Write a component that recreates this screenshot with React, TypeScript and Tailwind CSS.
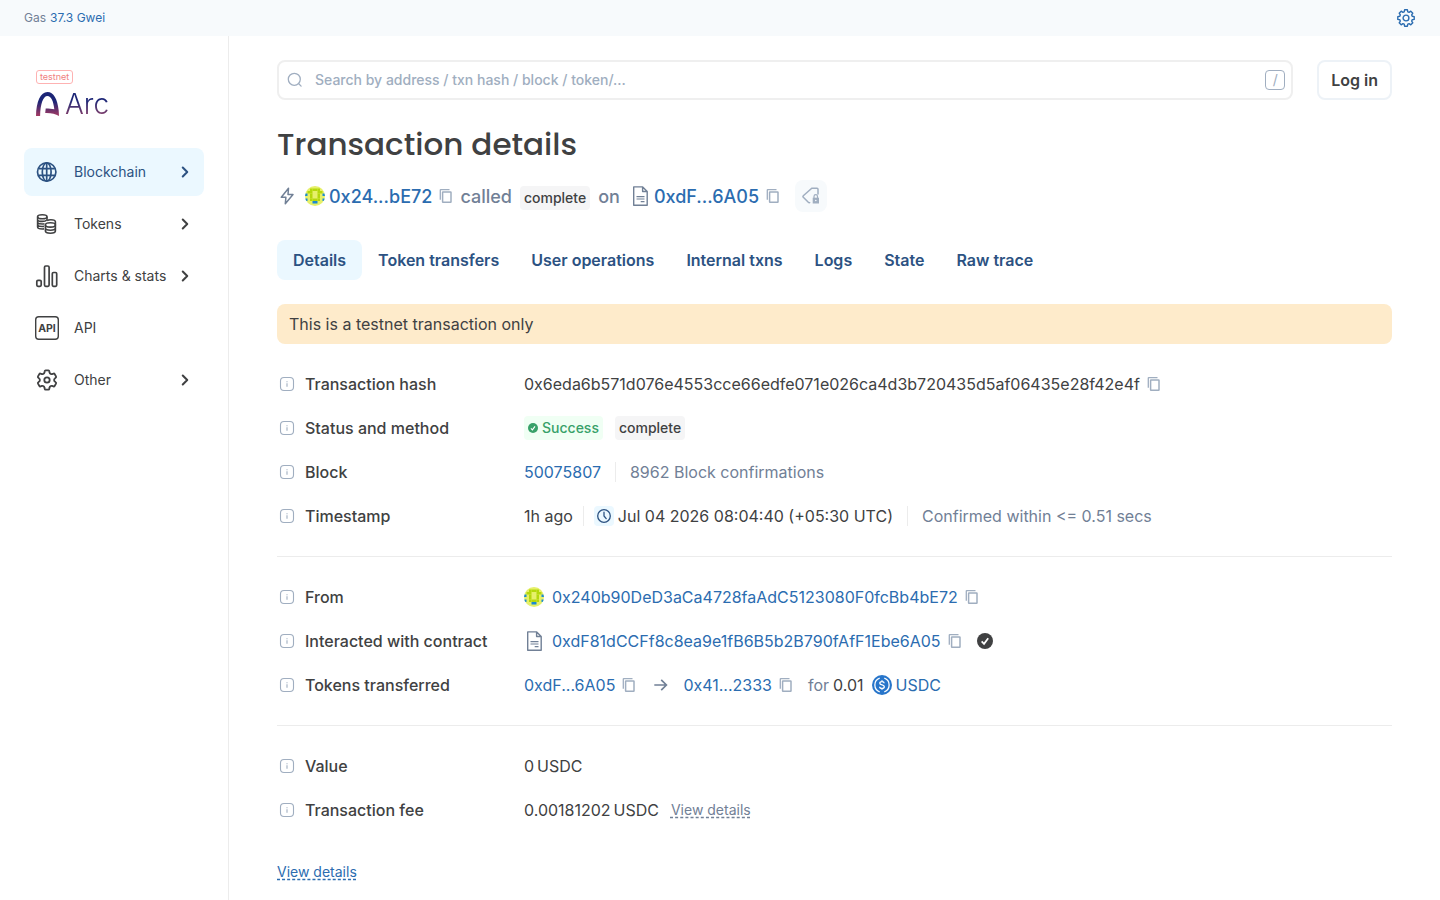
import type { ReactNode } from "react"
import { ChevronRight } from "lucide-react"

// Types
interface NavItem {
  label: string
  icon: ReactNode
  active?: boolean
  nested?: boolean
}

interface DetailRow {
  label: string
  value: ReactNode
}

const tabs = ["Details", "Token transfers", "User operations", "Internal txns", "Logs", "State", "Raw trace"]

/* Icons */
function GlobeIcon() {
  return (
    <svg viewBox="0 0 30 30" className="w-[30px] h-[30px] shrink-0" fill="none" stroke="currentColor" strokeWidth="1.7">
      <circle cx="14.700" cy="15" r="9.2" />
      <ellipse cx="14.700" cy="15" rx="4.4" ry="9.2" />
      <path d="M14.700 6v18M6.500 11.600h16.400M6.500 18.400h16.400" />
    </svg>
  )
}

function TokensIcon() {
  return (
    <svg viewBox="0 0 30 30" className="w-[30px] h-[30px] shrink-0" fill="none" stroke="currentColor" strokeWidth="1.600">
      <ellipse cx="10.300" cy="7.700" rx="4.700" ry="2" />
      <path d="M5.600 7.700v10.300c0 1.200 2.100 2 4.700 2 .6 0 1.200 0 1.700-.1M15 7.700v3.500M5.600 10.400c0 1.200 2.100 2 4.700 2 1.900 0 3.600-.5 4.300-1.200M5.600 13c0 1.200 2.100 2 4.700 2 .8 0 1.500-.1 2.200-.2M5.600 15.500c0 1.200 2.100 2 4.700 2 .6 0 1.200 0 1.700-.1" />
      <ellipse cx="18.400" cy="15.900" rx="5" ry="2.200" />
      <path d="M13.400 15.900v6.200c0 1.300 2.200 2.200 5 2.200s5-.9 5-2.200v-9.300c0-1.200-2-2.100-4.600-2.100-1.500 0-2.900.3-3.700.9M13.400 19c0 1.300 2.200 2.200 5 2.200s5-.9 5-2.200" />
    </svg>
  )
}

function StatsIcon() {
  return (
    <svg viewBox="0 0 30 30" className="w-[30px] h-[30px] shrink-0" fill="none" stroke="currentColor" strokeWidth="1.7">
      <rect x="4.800" y="19.300" width="4.400" height="6" rx="1.200" />
      <rect x="12.500" y="5" width="4.600" height="20.300" rx="1.200" />
      <rect x="20.300" y="11.500" width="4.400" height="13.800" rx="1.200" />
    </svg>
  )
}

function ApiIcon() {
  return (
    <svg viewBox="0 0 30 30" className="w-[30px] h-[30px] shrink-0">
      <rect x="3.700" y="3.700" width="22.600" height="22.600" rx="3" fill="none" stroke="currentColor" strokeWidth="1.4" />
      <text x="15" y="19" textAnchor="middle" fontSize="10.500" fontWeight="700" fill="currentColor">API</text>
    </svg>
  )
}

function GearIcon() {
  return (
    <svg viewBox="0 0 30 30" className="w-[30px] h-[30px] shrink-0" fill="none" stroke="currentColor" strokeWidth="1.800" strokeLinejoin="round">
      <path d="M13.600 5.400h2.800q.8 0 .9.800l.3 1.500q.1.600.7.900l.6.400q.5.300 1.100.1l1.500-.5q.7-.3 1.100.4l1.400 2.400q.4.700-.2 1.200l-1.100 1q-.5.400-.5 1v.8q0 .6.500 1l1.100 1q.6.500.2 1.200l-1.400 2.400q-.4.700-1.100.4l-1.500-.5q-.6-.2-1.100.1l-.6.400q-.6.300-.7.900l-.3 1.500q-.1.800-.9.800h-2.800q-.8 0-.9-.8l-.3-1.500q-.1-.6-.7-.9l-.6-.4q-.5-.3-1.100-.1l-1.500.5q-.7.300-1.100-.4l-1.400-2.400q-.4-.7.200-1.200l1.100-1q.5-.4.500-1v-.8q0-.6-.5-1l-1.100-1q-.6-.5-.2-1.200l1.400-2.400q.4-.7 1.100-.4l1.500.5q.6.200 1.100-.1l.6-.4q.6-.3.700-.9l.3-1.500q.1-.8.900-.8z" />
      <circle cx="15" cy="15" r="2.700" />
    </svg>
  )
}

function SettingsIcon() {
  return (
    <svg viewBox="0 0 20 20" className="size-5" fill="none" stroke="currentColor" strokeWidth="1.400" strokeLinejoin="round">
      <path d="M8.600 1.800h2.800l.4 2 1.300.5 1.700-1.100 2 2-1.100 1.700.5 1.300 2 .4v2.800l-2 .4-.5 1.300 1.100 1.700-2 2-1.700-1.100-1.300.5-.4 2H8.600l-.4-2-1.300-.5-1.700 1.100-2-2 1.100-1.700-.5-1.300-2-.4V8.600l2-.4.5-1.300-1.100-1.700 2-2 1.700 1.100 1.300-.5z" />
      <circle cx="10" cy="10" r="2.900" />
    </svg>
  )
}

function InfoIcon() {
  return (
    <svg viewBox="0 0 20 20" className="size-5 shrink-0 text-[#a0aec0]" fill="none" stroke="currentColor">
      <rect x="3.500" y="3.500" width="13" height="13" rx="3.500" strokeWidth="1.100" />
      <path d="M10 9.300v3.500M10 7.200v1.100" strokeWidth="1.100" />
    </svg>
  )
}

function CopyButton() {
  return (
    <button type="button" aria-label="Copy to clipboard" className="size-5 shrink-0 text-[#a0aec0]">
      <svg viewBox="0 0 20 20" className="size-5" fill="none" stroke="currentColor" strokeLinejoin="round">
        <path d="M4.300 13.800V4.100q0-.5.500-.5h8.700" strokeWidth="1.300" />
        <rect x="6.600" y="5.900" width="8.400" height="10.400" rx=".4" strokeWidth="1.500" />
      </svg>
    </button>
  )
}

function ContractIcon() {
  return (
    <svg viewBox="0 0 20 20" className="size-5 shrink-0 text-[#718096]" fill="none" stroke="currentColor" strokeWidth="1.400">
      <path d="M3.700.9h9l4.500 4.500v13.800H3.700zM12.600.9v4.600h4.600" strokeLinejoin="round" />
      <path d="M6.500 10.600h8M6.500 13h8M10.700 15.600h3.800" strokeWidth="1.200" />
    </svg>
  )
}

// 8x8 blockie, g = green, b = blue, dot = background
const blockie = [
  "........",
  "..gggg..",
  ".gg..gg.",
  "b.g..g.b",
  "..g..g..",
  "b.gggg.b",
  "...bb...",
  "........",
]

function Identicon() {
  return (
    <svg viewBox="0 0 8 8" className="size-5 shrink-0 rounded-full bg-[#e6f06a]">
      {blockie.map((row, y) =>
        row.split("").map((cell, x) =>
          cell === "." ? null : (
            <rect key={`${x}-${y}`} x={x} y={y} width="1" height="1" fill={cell === "g" ? "#b5d80c" : "#1b8ad3"} />
          )
        )
      )}
    </svg>
  )
}

function UsdcIcon() {
  return (
    <svg viewBox="0 0 20 20" className="size-5 shrink-0" fill="none" stroke="#fff">
      <circle cx="10" cy="10" r="10" fill="#2775ca" stroke="none" />
      <path d="M7.700 3.200a7.200 7.200 0 0 0 0 13.600M12.300 3.200a7.200 7.200 0 0 1 0 13.600" strokeWidth="1.300" />
      <path d="M12.200 8.200c-.1-1-1-1.600-2.200-1.600s-2.200.6-2.200 1.600c0 2.300 4.500 1.200 4.500 3.500 0 1-1 1.700-2.300 1.700s-2.300-.6-2.400-1.700M10 5.200v1.400M10 13.400v1.400" strokeWidth="1.300" />
    </svg>
  )
}

function CheckIcon({ className }: { className: string }) {
  return (
    <svg viewBox="0 0 20 20" className={className}>
      <circle cx="10" cy="10" r="10" fill="currentColor" />
      <path d="M5.800 10.600l3 3 5.200-7" fill="none" stroke="#fff" strokeWidth="2.200" />
    </svg>
  )
}

function Address({ children }: { children: string }) {
  return <a href="#" className="text-[#2b6cb0]">{children}</a>
}

function MethodTag() {
  return <span className="inline-flex items-center h-6 px-1 rounded-sm bg-[#f5f5f6] text-sm leading-5 font-medium text-[#404142]">complete</span>
}

function Separator() {
  return <span className="w-px h-5 bg-[#ececec]" />
}

const navItems: NavItem[] = [
  { label: "Blockchain", icon: <GlobeIcon />, active: true, nested: true },
  { label: "Tokens", icon: <TokensIcon />, nested: true },
  { label: "Charts & stats", icon: <StatsIcon />, nested: true },
  { label: "API", icon: <ApiIcon /> },
  { label: "Other", icon: <GearIcon />, nested: true },
]

const rowGroups: DetailRow[][] = [
  [
    {
      label: "Transaction hash",
      value: (
        <div className="flex items-center gap-1">
          <span>0x6eda6b571d076e4553cce66edfe071e026ca4d3b720435d5af06435e28f42e4f</span>
          <CopyButton />
        </div>
      ),
    },
    {
      label: "Status and method",
      value: (
        <div className="flex items-center gap-3">
          <span className="inline-flex items-center gap-1 h-6 px-1 rounded-sm bg-[#f0fff4] text-sm leading-5 font-medium text-[#38a169]">
            <CheckIcon className="size-[10px]" />
            Success
          </span>
          <MethodTag />
        </div>
      ),
    },
    {
      label: "Block",
      value: (
        <div className="flex items-center gap-3.5">
          <Address>50075807</Address>
          <Separator />
          <span className="text-[#718096]">8962 Block confirmations</span>
        </div>
      ),
    },
    {
      label: "Timestamp",
      value: (
        <div className="flex items-center">
          <span className="mr-2.5">1h ago</span>
          <Separator />
          <button type="button" aria-label="Toggle time format" className="ml-2.5 mr-1 size-5 rounded-sm bg-[#ebf8ff] text-[#2c5282]">
            <svg viewBox="0 0 20 20" className="size-5" fill="none" stroke="currentColor" strokeWidth="1.300" strokeLinecap="round">
              <circle cx="10" cy="10" r="6.300" />
              <path d="M10 6.200V10l2.200 2.600" />
            </svg>
          </button>
          <span className="mr-3.5">Jul 04 2026 08:04:40 (+05:30 UTC)</span>
          <Separator />
          <span className="ml-3.5 text-[#718096]">Confirmed within &lt;= 0.51 secs</span>
        </div>
      ),
    },
  ],
  [
    {
      label: "From",
      value: (
        <div className="flex items-center">
          <Identicon />
          <span className="ml-2 mr-1"><Address>0x240b90DeD3aCa4728faAdC5123080F0fcBb4bE72</Address></span>
          <CopyButton />
        </div>
      ),
    },
    {
      label: "Interacted with contract",
      value: (
        <div className="flex items-center">
          <ContractIcon />
          <span className="ml-2 mr-1"><Address>0xdF81dCCFf8c8ea9e1fB6B5b2B790fAfF1Ebe6A05</Address></span>
          <CopyButton />
          <CheckIcon className="ml-3 size-4" />
        </div>
      ),
    },
    {
      label: "Tokens transferred",
      value: (
        <div className="flex items-center">
          <span className="mr-1"><Address>0xdF...6A05</Address></span>
          <CopyButton />
          <svg viewBox="0 0 20 20" className="mx-3 size-5 text-[#718096]" fill="none" stroke="currentColor" strokeWidth="1.700">
            <path d="M3.300 10h12M10.200 4.800l5.200 5.200-5.200 5.200" />
          </svg>
          <span className="mr-1"><Address>0x41...2333</Address></span>
          <CopyButton />
          <span className="ml-3 mr-1 text-[#718096]">for</span>
          <span className="mr-2">0.01</span>
          <UsdcIcon />
          <span className="ml-1"><Address>USDC</Address></span>
        </div>
      ),
    },
  ],
  [
    { label: "Value", value: <span>0&#8201;USDC</span> },
    {
      label: "Transaction fee",
      value: (
        <div className="flex items-center gap-3">
          <span>0.00181202&#8201;USDC</span>
          <button type="button" className="text-sm leading-5 text-[#718096] underline decoration-dashed underline-offset-2">View details</button>
        </div>
      ),
    },
  ],
]

function TopBar() {
  return (
    <div className="flex items-center justify-between h-9 px-6 bg-[#f7fafc] text-xs leading-4">
      <div className="flex gap-1">
        <span className="text-[#718096]">Gas</span>
        <a href="#" className="text-[#2b6cb0]">37.3 Gwei</a>
      </div>
      <button type="button" aria-label="Settings" className="text-[#2b6cb0]">
        <SettingsIcon />
      </button>
    </div>
  )
}

function Logo() {
  return (
    <a href="#" className="flex flex-col items-start px-3">
      <span className="px-[3px] h-[14px] rounded-[3px] border border-[#feb2b2] text-[9px] leading-3 text-[#f08080]">testnet</span>
      <span className="mt-1 flex items-center gap-[5px]">
        <svg viewBox="0 0 24 26" className="w-6 h-[26px]">
          <defs>
            <linearGradient id="arcGradient" x1="0" y1="0" x2="0" y2="1">
              <stop offset="0.400" stopColor="#1c2576" />
              <stop offset="1" stopColor="#a53a62" />
            </linearGradient>
          </defs>
          <path
            d="M0 25C.3 10.500 4.500 1 11.500 1 17.500 1 21.500 8 22.700 19.500L23 25c-3.500-2-8-3.200-13.800-3l.5-4.500c3.200 0 6 .2 8.600.8C17.400 9.800 15 5 11.500 5 7 5 4.400 13 4.100 25z"
            fill="url(#arcGradient)"
          />
        </svg>
        <span className="bg-linear-to-b from-[#1c2576] from-40% to-[#a53a62] bg-clip-text text-transparent text-[28px] leading-8 font-light">Arc</span>
      </span>
    </a>
  )
}

function Sidebar() {
  return (
    <aside className="w-[229px] shrink-0 border-r border-[#ececec] px-6 pt-[34px]">
      <Logo />
      <nav className="mt-7 flex flex-col gap-1">
        {navItems.map((item) => (
          <a
            key={item.label}
            href="#"
            className={`flex items-center h-12 w-[180px] pl-2 pr-2.5 rounded-lg text-sm leading-5 ${item.active ? "bg-[#ebf8ff] text-[#2c5282]" : "text-[#404142]"}`}
          >
            {item.icon}
            <span className="ml-3 grow whitespace-nowrap">{item.label}</span>
            {item.nested && <ChevronRight size={18} strokeWidth={2.7} className="shrink-0" />}
          </a>
        ))}
      </nav>
    </aside>
  )
}

function SearchBar() {
  return (
    <div className="flex items-center gap-6">
      <label className="flex grow items-center h-10 px-1.5 rounded-lg border-2 border-[#efefef]">
        <svg viewBox="0 0 20 20" className="size-5 text-[#a0aec0]" fill="none" stroke="currentColor" strokeWidth="1.300" strokeLinecap="round">
          <circle cx="9.300" cy="9.300" r="6" />
          <path d="M13.800 13.800l2.300 2.300" />
        </svg>
        <input
          type="text"
          aria-label="Search"
          placeholder="Search by address / txn hash / block / token/..."
          className="ml-2.5 grow text-sm leading-5 font-medium outline-none placeholder:text-[#a0aec0]"
        />
        <kbd className="flex items-center justify-center size-5 rounded-sm border border-[#a0aec0] font-[inherit] text-sm leading-5 text-[#a0aec0]">/</kbd>
      </label>
      <button type="button" className="h-10 px-3 rounded-lg border-2 border-[#edf2f7] text-base font-semibold">Log in</button>
    </div>
  )
}

function TransactionSummary() {
  return (
    <div className="mt-4 flex items-center h-8 text-lg leading-6 font-medium text-[#718096]">
      <svg viewBox="0 0 20 20" className="mr-2 size-5" fill="none" stroke="currentColor" strokeWidth="1.500" strokeLinejoin="round">
        <path d="M11.500 2.300L4.300 11.300h4.600L8.300 17.700l7.700-9.100h-5z" />
      </svg>
      <Identicon />
      <span className="mx-1 pt-0.5"><Address>0x24...bE72</Address></span>
      <CopyButton />
      <div className="ml-1 mr-2.5 flex items-baseline gap-2 pt-0.5">
        <span>called</span>
        <MethodTag />
        <span>on</span>
      </div>
      <ContractIcon />
      <span className="mx-1 pt-0.5"><Address>0xdF...6A05</Address></span>
      <CopyButton />
      <button type="button" aria-label="Private tags" className="ml-3 flex items-center justify-center size-8 rounded-lg bg-[#f7fafc] text-[#a0aec0]">
        <svg viewBox="0 0 20 20" className="size-5" fill="none" stroke="currentColor" strokeWidth="1.500">
          <path d="M17 8.500V3.200c0-.6-.4-1-1-1h-5.200L2.300 9.700c-.5.500-.5 1.100 0 1.600l5 5c.5.500 1.300.5 1.800 0" />
          <path d="M13 12v-1.500c0-1.200.8-1.800 1.800-1.800s1.700.6 1.700 1.800V12" strokeWidth="1.200" />
          <path d="M11.700 11.700h6.300v5.800h-6.300z" fill="currentColor" stroke="none" />
          <circle cx="14.800" cy="14.500" r=".8" fill="#f7fafc" stroke="none" />
        </svg>
      </button>
    </div>
  )
}

export default function App() {
  return (
    <div className="min-h-screen flex flex-col bg-white font-['Inter',sans-serif] text-base leading-6 text-[#404142]">
      <TopBar />
      <div className="flex grow">
        <Sidebar />
        <main className="grow min-w-0 px-12 pt-6 pb-4">
          <SearchBar />
          <h1 className="mt-6 text-[31px] leading-10 font-medium font-['Poppins','Inter',sans-serif]">Transaction details</h1>
          <TransactionSummary />

          {/* Tabs */}
          <div role="tablist" className="mt-7 flex">
            {tabs.map((tab, idx) => (
              <button
                key={tab}
                type="button"
                role="tab"
                aria-selected={idx === 0}
                className={`h-10 px-4 rounded-lg font-semibold text-[#2c5282] ${idx === 0 ? "bg-[#ebf8ff]" : ""}`}
              >
                {tab}
              </button>
            ))}
          </div>

          <div role="status" className="mt-6 px-3 py-2 rounded-lg bg-[#feebcb]">This is a testnet transaction only</div>

          {/* Details */}
          <div className="mt-7">
            {rowGroups.map((rows, idx) => (
              <dl
                key={idx}
                className={`grid grid-cols-[239px_1fr] gap-x-2 gap-y-5 ${idx > 0 ? "mt-7 pt-7 border-t border-[#ececec]" : ""}`}
              >
                {rows.map((row) => (
                  <div key={row.label} className="contents">
                    <dt className="flex items-center gap-2 h-6 font-medium">
                      <InfoIcon />
                      {row.label}
                    </dt>
                    <dd className="h-6 whitespace-nowrap">{row.value}</dd>
                  </div>
                ))}
              </dl>
            ))}
          </div>

          <button type="button" className="mt-10 block text-sm leading-5 text-[#2b6cb0] underline decoration-dashed underline-offset-2">View details</button>
        </main>
      </div>
    </div>
  )
}
